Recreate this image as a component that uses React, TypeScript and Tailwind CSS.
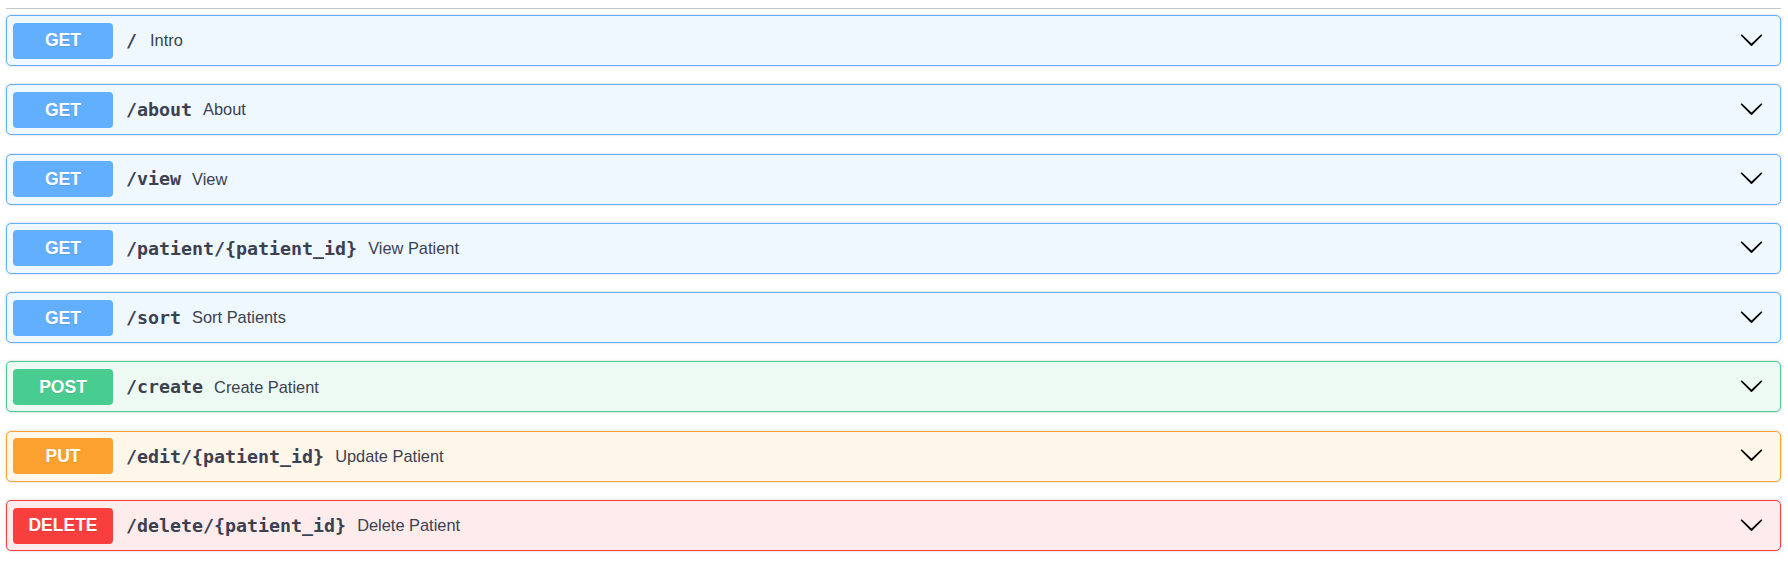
import React from 'react';

type Method = 'GET' | 'POST' | 'PUT' | 'DELETE';

interface Operation {
  method: Method;
  path: string;
  summary: string;
}

const operations: Operation[] = [
  { method: 'GET', path: '/', summary: 'Intro' },
  { method: 'GET', path: '/about', summary: 'About' },
  { method: 'GET', path: '/view', summary: 'View' },
  { method: 'GET', path: '/patient/{patient_id}', summary: 'View Patient' },
  { method: 'GET', path: '/sort', summary: 'Sort Patients' },
  { method: 'POST', path: '/create', summary: 'Create Patient' },
  { method: 'PUT', path: '/edit/{patient_id}', summary: 'Update Patient' },
  { method: 'DELETE', path: '/delete/{patient_id}', summary: 'Delete Patient' },
];

const blockStyles: Record<Method, string> = {
  GET: 'border-[#61affe] bg-[#eff7ff]',
  POST: 'border-[#49cc90] bg-[#edfaf4]',
  PUT: 'border-[#fca130] bg-[#fff6ea]',
  DELETE: 'border-[#f93e3e] bg-[#feecec]',
};

const badgeStyles: Record<Method, string> = {
  GET: 'bg-[#61affe]',
  POST: 'bg-[#49cc90]',
  PUT: 'bg-[#fca130]',
  DELETE: 'bg-[#f93e3e]',
};

function Arrow() {
  return (
    <svg className="-mt-[3px] shrink-0" width="25" height="25" viewBox="0 0 20 20" aria-hidden="true">
      <path
        fill="#000"
        d="M17.418 6.109c.272-.268.709-.268.979 0s.271.701 0 .969l-7.908 7.83c-.27.268-.707.268-.979 0l-7.908-7.83c-.27-.268-.27-.701 0-.969.271-.268.709-.268.979 0L10 13.25l7.418-7.141z"
      />
    </svg>
  );
}

function OperationRow({ op }: { op: Operation }) {
  return (
    <div
      className={`mb-[18.3px] flex h-[51px] items-center rounded-[5px] border px-[6px] shadow-[0_0_3px_rgba(0,0,0,0.19)] ${blockStyles[op.method]}`}
    >
      <span
        className={`flex h-[36px] w-[100px] shrink-0 items-center justify-center rounded-[4px] text-[17.5px] font-bold text-white [text-shadow:0_1px_0_rgba(0,0,0,0.1)] ${badgeStyles[op.method]}`}
        style={{ fontFamily: '"Liberation Sans", Arial, sans-serif' }}
      >
        {op.method}
      </span>
      <span
        className="ml-[13px] text-[18.3px] font-bold text-[#3b4151]"
        style={{ fontFamily: '"DejaVu Sans Mono", monospace' }}
      >
        {op.path}
      </span>
      <span
        className={`${op.path === '/' ? 'ml-[13px]' : 'ml-[11px]'} text-[16.4px] text-[#3b4151]`}
        style={{ fontFamily: '"Liberation Sans", Arial, sans-serif' }}
      >
        {op.summary}
      </span>
      <span className="flex-1" />
      <span className="mr-[10px]">
        <Arrow />
      </span>
    </div>
  );
}

export default function App() {
  return (
    <div className="min-h-screen bg-white px-[6px]">
      <div className="h-[9px] w-[1775px] border-b border-[#c4c6cc]" />
      <div className="mt-[6px] w-[1775px]">
        {operations.map((op) => (
          <OperationRow key={op.method + op.path} op={op} />
        ))}
      </div>
    </div>
  );
}
